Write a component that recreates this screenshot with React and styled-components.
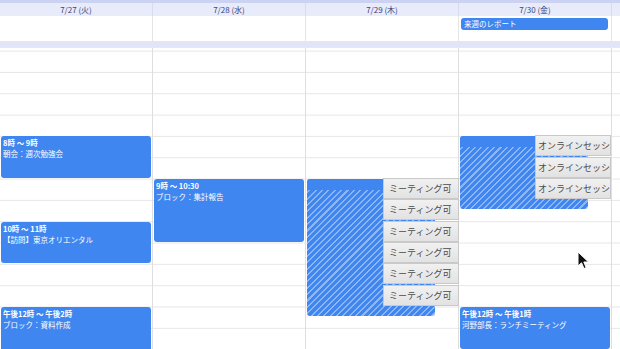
import React from "react"
import styled, { createGlobalStyle } from "styled-components"

const HOUR = 42.67
const ORIGIN = 2.6
const BLUE = "#4086f0"

const Global = createGlobalStyle`
  body {
    margin: 0;
    background: #ffffff;
    font-family: "Noto Sans CJK JP", "Noto Sans", sans-serif;
  }
`

const Page = styled.div`
  width: 620px;
  height: 349px;
  overflow: hidden;
  position: relative;
  background: #ffffff;
`

const TopBar = styled.div`
  height: 3px;
  background: #ccd2f2;
`

const Row = styled.div`
  display: grid;
  grid-template-columns: repeat(5, 153px);
  height: ${props => props.h}px;
  background: ${props => props.bg || "#ffffff"};
`

const HeadCell = styled.div`
  border-right: 1px solid #d7dbf0;
  display: flex;
  align-items: center;
  justify-content: center;
  font-size: 8px;
  color: #39447f;
`

const AllDayCell = styled.div`
  border-right: 1px solid #e4e4e4;
  padding: 2px 3px 0 2px;
`

const AllDayEvent = styled.div`
  height: 12px;
  border-radius: 3px;
  background: ${BLUE};
  color: #ffffff;
  font-size: 7.5px;
  line-height: 12px;
  padding-left: 3px;
`

const Separator = styled.div`
  height: 6px;
  background: #e1e5f7;
  border-bottom: 1px solid #e8e8e8;
`

const Body = styled.div`
  display: grid;
  grid-template-columns: repeat(5, 153px);
  height: 302px;
`

const Column = styled.div`
  position: relative;
  border-right: 1px solid #dedede;
  background-image: linear-gradient(#e6e6e6 1px, transparent 1px);
  background-size: 100% ${HOUR / 2}px;
  background-position: 0 ${ORIGIN}px;
`

const Event = styled.div`
  position: absolute;
  left: 1px;
  width: ${props => props.w || 150}px;
  background: ${BLUE};
  border-radius: 3px;
  color: #ffffff;
  font-size: 7.5px;
  line-height: 11px;
  padding: 1px 2px;
  box-sizing: border-box;
  overflow: hidden;
`

const Time = styled.div`
  font-weight: 700;
`

const Hatched = styled.div`
  position: absolute;
  left: 1px;
  width: 128px;
  border-radius: 3px;
  background-color: ${BLUE};
  background-image: repeating-linear-gradient(
    135deg,
    rgba(255, 255, 255, 0.4) 0px,
    rgba(255, 255, 255, 0.4) 1.5px,
    transparent 1.5px,
    transparent 4.5px
  );
`

const SolidCap = styled.div`
  width: 76px;
  height: 11px;
  background: ${BLUE};
  border-radius: 3px 0 0 0;
`

const Slot = styled.div`
  position: absolute;
  left: ${props => props.l}px;
  width: 76px;
  height: 21px;
  box-sizing: border-box;
  background: linear-gradient(#f1f1f1, #e2e2e2);
  border: 1px solid #c9c9c9;
  color: #4a4a4a;
  font-size: 9px;
  line-height: 19px;
  padding-left: ${props => props.pad}px;
  white-space: nowrap;
`

const Cursor = styled.svg`
  position: absolute;
  left: 577px;
  top: 251px;
`

const y = h => ORIGIN + (h - 6) * HOUR + 0.5
const hgt = d => d * HOUR - 1

const days = ["7/27 (火)", "7/28 (水)", "7/29 (木)", "7/30 (金)", ""]

export default function App() {
  return (
    <Page>
      <Global />
      <TopBar />
      <Row h={13} bg="#e8ebfa">
        {days.map((d, i) => <HeadCell key={i}>{d}</HeadCell>)}
      </Row>
      <Row h={25}>
        <AllDayCell />
        <AllDayCell />
        <AllDayCell />
        <AllDayCell><AllDayEvent>来週のレポート</AllDayEvent></AllDayCell>
        <AllDayCell />
      </Row>
      <Separator />
      <Body>
        <Column>
          <Event style={{ top: y(8), height: hgt(1) }}>
            <Time>8時 〜 9時</Time>
            <div>朝会：週次勉強会</div>
          </Event>
          <Event style={{ top: y(10), height: hgt(1) }}>
            <Time>10時 〜 11時</Time>
            <div>【訪問】東京オリエンタル</div>
          </Event>
          <Event style={{ top: y(12), height: hgt(2) }}>
            <Time>午後12時 〜 午後2時</Time>
            <div>ブロック：資料作成</div>
          </Event>
        </Column>
        <Column>
          <Event style={{ top: y(9), height: hgt(1.5) }}>
            <Time>9時 〜 10:30</Time>
            <div>ブロック：集計報告</div>
          </Event>
        </Column>
        <Column>
          <Hatched style={{ top: y(9), height: hgt(3.22) }}>
            <SolidCap />
          </Hatched>
          {[0, 1, 2, 3, 4, 5].map(i => (
            <Slot key={i} l={77} pad={5} style={{ top: y(9 + i / 2) - 1 }}>ミーティング可</Slot>
          ))}
        </Column>
        <Column>
          <Hatched style={{ top: y(8), height: hgt(1.73) }}>
            <SolidCap />
          </Hatched>
          {[0, 1, 2].map(i => (
            <Slot key={i} l={76} pad={2} style={{ top: y(8 + i / 2) - 1 }}>オンラインセッシ</Slot>
          ))}
          <Event style={{ top: y(12), height: hgt(1) }}>
            <Time>午後12時 〜 午後1時</Time>
            <div>河野部長：ランチミーティング</div>
          </Event>
        </Column>
        <Column />
      </Body>
      <Cursor width="13" height="19" viewBox="0 0 13 19">
        <path d="M1 1 L1 15 L4.5 11.8 L7 17.5 L9.2 16.6 L6.8 11 L11.5 11 Z" fill="#111" stroke="#fff" strokeWidth="1" />
      </Cursor>
    </Page>
  )
}
